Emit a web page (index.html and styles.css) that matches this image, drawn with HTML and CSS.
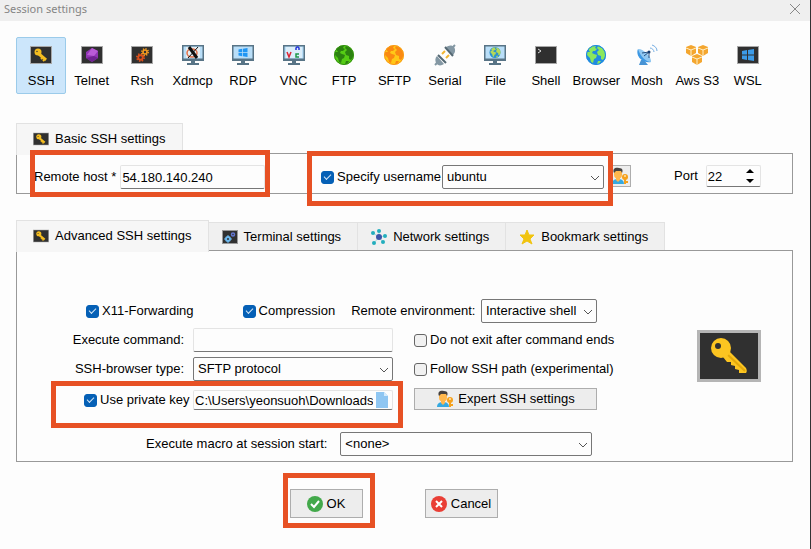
FILE: index.html
```html
<!DOCTYPE html>
<html lang="en">
<head>
    <meta charset="UTF-8">
    <meta name="viewport" content="width=device-width, initial-scale=1.0">
    <title>Session settings</title>
    <link rel="stylesheet" href="styles.css">
</head>
<body>
    <!-- Shared icons -->
    <svg class="sprite" aria-hidden="true">
        <symbol id="key" viewBox="0 0 64 52">
            <path fill="#b5b5b5" d="M0 0h64v52H0z"/>
            <path fill="#303030" d="M3 3h58v46H3z"/>
            <path fill="#fcc521" d="M32 21l17 17c1 2 1 4 0 5h-7v-3l-4-1v-3l-4-1v-3h-4l-4-5z"/>
            <path fill="none" stroke="#e3a90b" stroke-width="2" d="M31 25l17 16"/>
            <circle cx="24" cy="18" r="10" fill="#fcc521"/>
            <circle cx="21" cy="16" r="3" fill="#303030"/>
        </symbol>
        <symbol id="key-small" viewBox="0 0 22 18">
            <path fill="#a8a8a8" d="M0 0h22v18H0z"/>
            <path fill="#303030" d="M1 1h20v16H1z"/>
            <path fill="none" stroke="#f5bd1f" stroke-width="3" d="M9 8l7 6"/>
            <path fill="none" stroke="#f5bd1f" stroke-width="2" d="M12 12l-1 1M14 14l-1 1"/>
            <circle cx="8" cy="6" r="3.5" fill="#f5bd1f"/>
            <circle cx="7" cy="5.500" r="0.700" fill="#303030"/>
        </symbol>
        <symbol id="monitor" viewBox="0 0 22 22">
            <path fill="#587486" d="M0 1h22v16H0zM9 17h4v2H9zM5 19h12v2H5z"/>
            <path fill="#b9def8" d="M1.500 2.500h19v12h-19z"/>
        </symbol>
        <symbol id="land" viewBox="0 0 20 20">
            <path d="M2 4l4-3 4 0-1 2 2 1-2 2-2 0-1 2 2 1 3 1-1 3-2 1-1 4-2-1-1-4-3-3 0-3 3 0zM12 1l4 2 3 4 0 5-2 3-2-1 0-3-3-1-1-3 2-2-2-2zM12 16l3 0-2 3-2 0z"/>
        </symbol>
        <symbol id="windows" viewBox="0 0 12 12">
            <path d="M0 2l5-1v4.500H0zM6 1l6-1v5.500H6zM0 6.500h5V11l-5-1zM6 6.500h6V12l-6-1z"/>
        </symbol>
        <symbol id="user-key" viewBox="0 0 18 18">
            <path fill="#35a9e0" d="M1 17c0-4 3-5 6-5s6 1 6 5z"/>
            <path fill="#ffb74d" d="M5 10h4v3l-2 2-2-2zM3 4h8v4c0 5-8 5-8 0z"/>
            <path fill="#45403e" d="M3 6C1 1 5 0 8 1c4 0 4 3 3 5l-1-2H5z"/>
            <circle cx="14" cy="10" r="3" fill="#f5a11c"/>
            <path fill="#f5a11c" d="M13 12h2v5h-2zM15 14h2v2h-2z"/>
            <circle cx="14" cy="9" r="1" fill="#fde2b0"/>
        </symbol>
        <symbol id="gear" viewBox="0 0 10 10">
            <circle cx="5" cy="5" r="4" fill="none" stroke="currentColor" stroke-width="2" stroke-dasharray="1.570 1.570"/>
            <circle cx="5" cy="5" r="2.500" fill="none" stroke="currentColor" stroke-width="2"/>
        </symbol>
        <symbol id="chevron" viewBox="0 0 10 6">
            <path fill="none" stroke="#555" d="M1 1l4 4 4-4"/>
        </symbol>
    </svg>

    <header class="titlebar">
        <h1>Session settings</h1>
        <button class="close" type="button" aria-label="Close">
            <svg width="12" height="12" viewBox="0 0 12 12"><path fill="none" stroke="#888" d="M1 1l10 10M11 1L1 11"/></svg>
        </button>
    </header>

    <main class="content">
        <nav class="session-types">
            <button class="type selected" type="button">
                <svg viewBox="0 0 22 22"><use href="#key-small" y="2" width="22" height="18"/></svg>
                SSH
            </button>
            <button class="type" type="button">
                <svg viewBox="0 0 22 22">
                    <path fill="#a8a8a8" d="M0 2h22v18H0z"/><path fill="#303030" d="M1 3h20v16H1z"/>
                    <path fill="#9135b5" d="M11 4l6 3v7l-6 4-6-4V8z"/>
                    <path fill="#b95bd6" d="M11 4l6 3-4 5-7-1z"/><path fill="#702391" d="M13 12l4 2-6 4-6-4z"/>
                </svg>
                Telnet
            </button>
            <button class="type" type="button">
                <svg viewBox="0 0 22 22">
                    <path fill="#a8a8a8" d="M0 2h22v18H0z"/><path fill="#303030" d="M1 3h20v16H1z"/>
                    <use href="#gear" x="5" y="9" width="9" height="9" color="#dc501c"/>
                    <use href="#gear" x="10" y="4" width="8" height="8" color="#f09a20"/>
                </svg>
                Rsh
            </button>
            <button class="type" type="button">
                <svg viewBox="0 0 22 22">
                    <use href="#monitor" width="22" height="22"/>
                    <path fill="#e6eef2" d="M4 3h14v11H4z"/>
                    <ellipse cx="10" cy="9" rx="5" ry="4" fill="none" stroke="#e0704a" stroke-width="1.500"/>
                    <path fill="none" stroke="#111" stroke-width="3" d="M7 3l8 11"/>
                    <path fill="none" stroke="#111" d="M16 3L6 14"/>
                </svg>
                Xdmcp
            </button>
            <button class="type" type="button">
                <svg viewBox="0 0 22 22"><use href="#monitor" width="22" height="22"/><use href="#windows" x="6" y="4" width="10" height="9" fill="#2196f3"/></svg>
                RDP
            </button>
            <button class="type" type="button">
                <svg viewBox="0 0 22 22">
                    <use href="#monitor" width="22" height="22"/>
                    <path fill="#dceefa" d="M3 3h16v11H3z"/>
                    <path fill="none" stroke="#dc2434" stroke-width="1.500" d="M4 8l2 5 2-5"/>
                    <path fill="none" stroke="#2434d8" stroke-width="1.500" d="M13 6V4l1-1h1l1 1v2"/>
                    <path fill="none" stroke="#1d9848" stroke-width="1.500" d="M16 10h-3v3h3"/>
                </svg>
                VNC
            </button>
            <button class="type" type="button">
                <svg viewBox="0 0 22 22"><circle cx="11" cy="11" r="10" fill="#55cc14"/><use href="#land" x="1" y="1" width="20" height="20" fill="#2c8210"/><circle cx="11" cy="11" r="9.500" fill="none" stroke="#348d14"/></svg>
                FTP
            </button>
            <button class="type" type="button">
                <svg viewBox="0 0 22 22"><circle cx="11" cy="11" r="10" fill="#ffc817"/><use href="#land" x="1" y="1" width="20" height="20" fill="#fa8a12"/><circle cx="11" cy="11" r="9.500" fill="none" stroke="#fa971b"/></svg>
                SFTP
            </button>
            <button class="type" type="button">
                <svg viewBox="0 0 22 22">
                    <path fill="none" stroke="#8398a3" stroke-width="2" d="M1 21l4-4M18 4l3-3"/>
                    <path fill="none" stroke="#f4b631" stroke-width="2" d="M8 10l3-3M12 14l3-3"/>
                    <path fill="#8498a4" d="M3 12l7 8c-3 2-6 2-8-1-1-3-1-5 1-7zM12 3c3-2 6-2 8 0 2 3 1 6-1 8z"/>
                    <path fill="none" stroke="#546873" stroke-width="2" d="M4 11l8 8M11 3l8 9"/>
                </svg>
                Serial
            </button>
            <button class="type" type="button">
                <svg viewBox="0 0 22 22"><use href="#monitor" width="22" height="22"/><circle cx="11" cy="8.500" r="5.500" fill="#2c91cf"/><use href="#land" x="6" y="3" width="11" height="11" fill="#b5d957"/></svg>
                File
            </button>
            <button class="type" type="button">
                <svg viewBox="0 0 22 22"><path fill="#a8a8a8" d="M0 2h22v18H0z"/><path fill="#303030" d="M1 3h20v16H1z"/><path fill="none" stroke="#ddd" d="M3 5l3 2-3 2"/></svg>
                Shell
            </button>
            <button class="type" type="button">
                <svg viewBox="0 0 22 22"><circle cx="11" cy="11" r="10" fill="#208be0"/><use href="#land" x="1" y="1" width="20" height="20" fill="#8be85c"/><circle cx="11" cy="11" r="9.500" fill="none" stroke="#208be0"/></svg>
                Browser
            </button>
            <button class="type" type="button">
                <svg viewBox="0 0 22 22">
                    <path fill="#4793d4" d="M3 21l2-5h3l4 5z"/>
                    <path fill="#3d98e3" d="M2 5c-3 6 4 15 13 13z"/>
                    <path fill="#91c8f1" d="M2 5c4-1 14 7 13 13-5 0-11-6-13-13z"/>
                    <path fill="none" stroke="#245082" d="M6 9l7-1v6M8 12l5-4"/>
                    <circle cx="13" cy="8" r="1.500" fill="#173d70"/>
                    <path fill="none" stroke="#75aee3" d="M14 4c2 0 4 2 4 4M16 1c3 1 5 3 5 6"/>
                </svg>
                Mosh
            </button>
            <button class="type" type="button">
                <svg viewBox="0 0 22 22">
                    <path fill="#f4a62f" d="M0 3l5-2 5 2v6l-5 3-5-3zM12 3l5-2 5 2v6l-5 3-5-3zM6 12l5-2 5 2v6l-5 3-5-3z"/>
                    <path fill="none" stroke="#fff0c9" d="M0 4l5 2 5-2M5 6v6M12 4l5 2 5-2M17 6v6M6 13l5 2 5-2M11 15v6"/>
                </svg>
                Aws S3
            </button>
            <button class="type" type="button">
                <svg viewBox="0 0 22 22"><path fill="#a8a8a8" d="M0 2h22v18H0z"/><path fill="#303030" d="M1 3h20v16H1z"/><use href="#windows" x="5" y="5" width="12" height="12" fill="#3c9be8"/></svg>
                WSL
            </button>
        </nav>

        <form>
            <section class="basic">
                <div class="tabs">
                    <button class="tab active" type="button">
                        <svg class="tab-icon" viewBox="0 0 22 18"><use href="#key-small"/></svg>
                        Basic SSH settings
                    </button>
                </div>
                <div class="panel basic-panel">
                    <div class="field host">
                        <label for="host">Remote host *</label>
                        <input class="text" id="host" type="text" value="54.180.140.240">
                        <span class="mark"></span>
                    </div>
                    <div class="field username">
                        <label class="check"><input type="checkbox" checked>Specify username</label>
                        <span class="select">
                            <select aria-label="Username"><option>ubuntu</option></select>
                            <svg class="arrow"><use href="#chevron"/></svg>
                        </span>
                        <span class="mark"></span>
                    </div>
                    <button class="button user" type="button" aria-label="Manage users">
                        <svg width="18" height="18"><use href="#user-key"/></svg>
                    </button>
                    <div class="field port">
                        <label for="port">Port</label>
                        <span class="spinner">
                            <input class="text" id="port" type="number" value="22">
                            <svg width="8" height="14" viewBox="0 0 8 14"><path d="M0 4l4-4 4 4zM0 10h8l-4 4z"/></svg>
                        </span>
                    </div>
                </div>
            </section>

            <section class="advanced">
                <div class="tabs">
                    <button class="tab active" type="button">
                        <svg class="tab-icon" viewBox="0 0 22 18"><use href="#key-small"/></svg>
                        Advanced SSH settings
                    </button>
                    <button class="tab" type="button">
                        <svg class="tab-icon" viewBox="0 0 16 16">
                            <path fill="#999" d="M0 1h16v14H0z"/><path fill="#303030" d="M1 2h14v12H1z"/>
                            <circle cx="6" cy="10" r="2" fill="none" stroke="#6cb8ee" stroke-width="2"/>
                            <path fill="none" stroke="#6cb8ee" d="M6 6v2M6 12v2M2 10h2M8 10h2"/>
                            <circle cx="11" cy="5.500" r="1.500" fill="none" stroke="#6477d0" stroke-width="1.500"/>
                        </svg>
                        Terminal settings
                    </button>
                    <button class="tab" type="button">
                        <svg class="tab-icon" viewBox="0 0 16 16">
                            <path fill="none" stroke="#a6dce0" d="M8 8V2M8 8L2 4M8 8l6-1M8 8l4 5M8 8l-5 6"/>
                            <g fill="#23aebd"><circle cx="8" cy="2" r="2"/><circle cx="2" cy="4" r="2"/><circle cx="14" cy="7" r="2"/><circle cx="12" cy="13" r="2"/><circle cx="3" cy="14" r="2"/></g>
                            <circle cx="8" cy="8" r="3" fill="#3c55a9"/>
                        </svg>
                        Network settings
                    </button>
                    <button class="tab" type="button">
                        <svg class="tab-icon" viewBox="0 0 16 16"><path fill="#f1c40f" stroke="#f1c40f" stroke-linejoin="round" d="M8 1l2 5h5l-4 4 2 5-5-3-5 3 2-5-4-4h5z"/></svg>
                        Bookmark settings
                    </button>
                </div>
                <div class="panel advanced-panel">
                    <div class="options">
                        <div class="row">
                            <label class="check"><input type="checkbox" checked>X11-Forwarding</label>
                            <label class="check compression"><input type="checkbox" checked>Compression</label>
                            <label class="environment" for="environment">Remote environment:</label>
                            <span class="select shell">
                                <select id="environment"><option>Interactive shell</option></select>
                                <svg class="arrow"><use href="#chevron"/></svg>
                            </span>
                        </div>

                        <label class="name" for="command">Execute command:</label>
                        <input class="text" id="command" type="text">
                        <label class="check"><input type="checkbox">Do not exit after command ends</label>

                        <label class="name" for="browser">SSH-browser type:</label>
                        <span class="select">
                            <select id="browser"><option>SFTP protocol</option></select>
                            <svg class="arrow"><use href="#chevron"/></svg>
                        </span>
                        <label class="check"><input type="checkbox">Follow SSH path (experimental)</label>

                        <div class="field private-key">
                            <label class="check"><input type="checkbox" checked>Use private key</label>
                            <span class="file">
                                <input class="text" type="text" aria-label="Private key file" value="C:\Users\yeonsuoh\Downloads\key.pem">
                                <svg width="12" height="16" viewBox="0 0 12 16"><path fill="#8fc6f2" d="M0 0h8l4 4v12H0z"/><path fill="#d5ebfc" d="M8 0l4 4H8z"/></svg>
                            </span>
                            <span class="mark"></span>
                        </div>
                        <button class="button expert" type="button">
                            <svg width="18" height="18"><use href="#user-key"/></svg>
                            Expert SSH settings
                        </button>

                        <div class="row macro">
                            <label for="macro">Execute macro at session start:</label>
                            <span class="select">
                                <select id="macro"><option>&lt;none&gt;</option></select>
                                <svg class="arrow"><use href="#chevron"/></svg>
                            </span>
                        </div>
                    </div>
                    <svg class="big-key"><use href="#key"/></svg>
                </div>
            </section>

            <footer class="actions">
                <div class="field">
                    <button class="button" type="button">
                        <svg width="16" height="16" viewBox="0 0 16 16"><circle cx="8" cy="8" r="8" fill="#43a94b"/><path fill="none" stroke="#fff" stroke-width="2" d="M4 8l3 3 5-6"/></svg>
                        OK
                    </button>
                    <span class="mark"></span>
                </div>
                <button class="button" type="button">
                    <svg width="16" height="16" viewBox="0 0 16 16"><circle cx="8" cy="8" r="8" fill="#e93e35"/><path fill="none" stroke="#fff" stroke-width="2" d="M5 5l6 6M11 5l-6 6"/></svg>
                    Cancel
                </button>
            </footer>
        </form>
    </main>
</body>
</html>
```
FILE: styles.css
```css
* {
    box-sizing: border-box;
}

body {
    margin: 0;
    min-height: 100vh;
    background: #fdfdfd;
    border-right: 1px solid #333;
    font-family: "Liberation Sans", Arial, sans-serif;
    font-size: 13px;
    line-height: 16px;
    color: #000;
}

button, input, select {
    font: inherit;
    color: inherit;
    margin: 0;
}

svg {
    display: block;
    flex-shrink: 0;
}

.sprite {
    position: absolute;
    width: 0;
    height: 0;
}

/* Title bar */
.titlebar {
    display: flex;
    justify-content: space-between;
    align-items: center;
    height: 21px;
    padding: 0 9px 4px 4px;
    background: #efefef;
}

.titlebar h1 {
    margin: 0;
    font-family: "Noto Sans", "Open Sans", sans-serif;
    font-size: 11px;
    font-weight: normal;
    color: #858585;
}

.close {
    padding: 0;
    border: none;
    background: none;
}

.content {
    padding: 16px 17px 20px 16px;
}

/* Session types */
.session-types {
    display: grid;
    grid-template-columns: repeat(15, 1fr);
    padding-right: 20px;
}

.type {
    display: flex;
    flex-direction: column;
    align-items: center;
    gap: 7px;
    height: 57px;
    padding: 6px 0 5px;
    border: 1px solid transparent;
    border-radius: 2px;
    background: none;
    white-space: nowrap;
}

.type svg {
    width: 22px;
    height: 22px;
}

.type.selected {
    background: #cce6fb;
    border-color: #9bcbea;
}

/* Tabs and panels */
.basic {
    margin-top: 29px;
}

.advanced {
    margin-top: 26px;
}

.tabs {
    display: flex;
    align-items: flex-end;
    height: 30px;
}

.tab {
    display: flex;
    align-items: center;
    gap: 6px;
    height: 28px;
    padding: 0 16px 0 13px;
    border: 1px solid #e2e2e2;
    border-left: none;
    border-bottom: none;
    background: #f0f0f0;
    white-space: nowrap;
}

/* the active tab covers the top line of its panel */
.tab.active {
    position: relative;
    z-index: 1;
    align-self: flex-start;
    height: 32px;
    padding: 0 16px 2px;
    border-left: 1px solid #e2e2e2;
    background: #f6f6f6;
}

.tab-icon {
    width: 16px;
    height: 16px;
}

.panel {
    display: flex;
    border: 1px solid #999;
}

/* Fields */
.field {
    position: relative;
    display: flex;
    align-items: center;
}

.text {
    width: 100%;
    height: 24px;
    padding: 0 1px;
    border: 1px solid #e4e4e4;
    border-bottom-color: #777;
    border-radius: 2px;
    outline: none;
    background: #fdfdfd;
}

.check {
    display: flex;
    align-items: center;
    gap: 3px;
    white-space: nowrap;
}

.check input {
    appearance: none;
    display: grid;
    flex-shrink: 0;
    place-items: center;
    width: 13px;
    height: 13px;
    border: 1px solid #666;
    border-radius: 3px;
    background: #f1f1f1;
}

.check input:checked {
    border-color: #0560b6;
    background: #0560b6;
}

.check input:checked::after {
    content: "";
    width: 6px;
    height: 3px;
    margin-bottom: 2px;
    border: solid #d4e6f7;
    border-width: 0 0 1px 1px;
    transform: rotate(-45deg);
}

.select {
    position: relative;
    display: block;
}

.select select {
    appearance: none;
    display: block;
    width: 100%;
    height: 24px;
    padding: 0 15px 0 4px;
    border: 1px solid #777;
    border-radius: 2px;
    background: #fdfdfd;
}

.arrow {
    position: absolute;
    right: 4px;
    top: 10px;
    width: 10px;
    height: 6px;
    pointer-events: none;
}

.button {
    display: flex;
    align-items: center;
    justify-content: center;
    gap: 4px;
    padding: 0;
    border: 1px solid #adadad;
    background: #ededed;
    white-space: nowrap;
}

/* Orange highlight frames */
.mark {
    position: absolute;
    z-index: 2;
    border: 5px solid #e75124;
    pointer-events: none;
}

.host .mark {
    inset: -15px -5px -8px -4px;
}

.username .mark {
    inset: -14px -9px -17px -14px;
}

.private-key .mark {
    inset: -9px -10px -18px -33px;
}

.actions .mark {
    inset: -16px -12px -10px -7px;
}

/* Basic settings */
.basic-panel {
    padding: 11px 17px 4px;
}

.host {
    width: 231px;
    gap: 4px;
    white-space: nowrap;
}

.username {
    width: 283px;
    margin-left: 56px;
}

.username .select {
    flex: 1;
    margin-left: 1px;
}

.user {
    width: 23px;
    height: 22px;
    margin-left: 4px;
}

.port {
    gap: 8px;
    height: 22px;
    margin-left: 43px;
}

.spinner {
    position: relative;
    width: 55px;
}

.spinner .text {
    display: block;
    height: 22px;
    appearance: textfield;
}

.spinner svg {
    position: absolute;
    right: 7px;
    top: 4px;
}

/* Advanced settings */
.advanced-panel {
    justify-content: space-between;
    padding: 48px 31px 5px 0;
}

.options {
    display: grid;
    grid-template-columns: 172px 200px 200px;
    grid-auto-rows: minmax(24px, auto);
    gap: 5px 4px;
}

.row {
    grid-column: 1 / -1;
    display: flex;
    align-items: center;
    white-space: nowrap;
}

.options > .row:first-child {
    padding-left: 69px;
}

.compression {
    margin-left: 49px;
}

.environment {
    margin-left: 16px;
}

.shell {
    width: 116px;
    margin-left: auto;
}

.name {
    align-self: center;
    padding-right: 5px;
    text-align: right;
}

.options > .check,
.expert {
    margin-left: 17px;
}

.private-key {
    grid-column: 1 / 3;
    align-self: end;
    justify-content: space-between;
    margin-left: 67px;
}

.file {
    position: relative;
    width: 200px;
}

.file .text {
    display: block;
    height: 20px;
    padding-right: 19px;
}

.file svg {
    position: absolute;
    right: 5px;
    top: 2px;
}

.expert {
    align-self: end;
    height: 22px;
}

.macro {
    gap: 13px;
    margin-top: 17px;
    padding-left: 129px;
}

.macro .select {
    width: 252px;
}

.big-key {
    width: 64px;
    height: 52px;
    margin-top: 31px;
}

/* Bottom buttons */
.actions {
    display: flex;
    justify-content: center;
    gap: 62px;
    margin-top: 27px;
    padding-right: 22px;
}

.actions .button {
    width: 73px;
    height: 29px;
}
```
